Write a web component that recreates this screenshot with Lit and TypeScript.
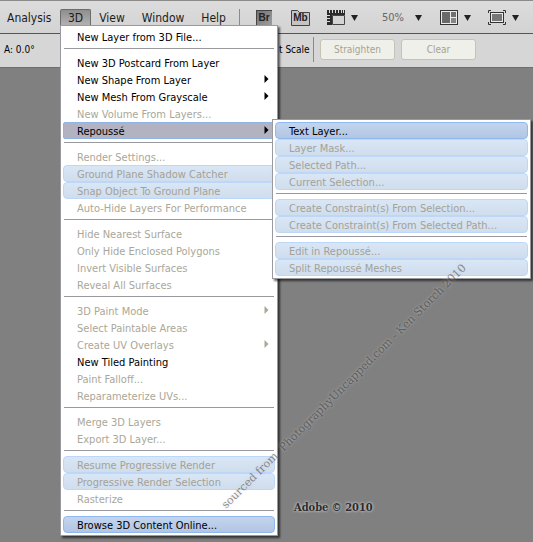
import { LitElement, html, css, svg, nothing, type TemplateResult } from "lit";
import { customElement, property } from "lit/decorators.js";

interface MenuEntry {
  label?: string;
  off?: boolean;
  tint?: boolean;
  open?: boolean;
  arrow?: boolean;
  children?: MenuEntry[];
}

const SEP: MenuEntry = {};

const REPOUSSE: MenuEntry[] = [
  { label: "Text Layer...", tint: true },
  { label: "Layer Mask...", tint: true, off: true },
  { label: "Selected Path...", tint: true, off: true },
  { label: "Current Selection...", tint: true, off: true },
  SEP,
  { label: "Create Constraint(s) From Selection...", tint: true, off: true },
  { label: "Create Constraint(s) From Selected Path...", tint: true, off: true },
  SEP,
  { label: "Edit in Repoussé...", tint: true, off: true },
  { label: "Split Repoussé Meshes", tint: true, off: true },
];

const MENU_3D: MenuEntry[] = [
  { label: "New Layer from 3D File..." },
  SEP,
  { label: "New 3D Postcard From Layer" },
  { label: "New Shape From Layer", arrow: true },
  { label: "New Mesh From Grayscale", arrow: true },
  { label: "New Volume From Layers...", off: true },
  { label: "Repoussé", arrow: true, open: true, children: REPOUSSE },
  SEP,
  { label: "Render Settings...", off: true },
  { label: "Ground Plane Shadow Catcher", off: true, tint: true },
  { label: "Snap Object To Ground Plane", off: true, tint: true },
  { label: "Auto-Hide Layers For Performance", off: true },
  SEP,
  { label: "Hide Nearest Surface", off: true },
  { label: "Only Hide Enclosed Polygons", off: true },
  { label: "Invert Visible Surfaces", off: true },
  { label: "Reveal All Surfaces", off: true },
  SEP,
  { label: "3D Paint Mode", off: true, arrow: true },
  { label: "Select Paintable Areas", off: true },
  { label: "Create UV Overlays", off: true, arrow: true },
  { label: "New Tiled Painting" },
  { label: "Paint Falloff...", off: true },
  { label: "Reparameterize UVs...", off: true },
  SEP,
  { label: "Merge 3D Layers", off: true },
  { label: "Export 3D Layer...", off: true },
  SEP,
  { label: "Resume Progressive Render", off: true, tint: true },
  { label: "Progressive Render Selection", off: true, tint: true },
  { label: "Rasterize", off: true },
  SEP,
  { label: "Browse 3D Content Online...", tint: true },
];

@customElement("menu-list")
export class MenuList extends LitElement {
  @property({ attribute: false }) entries: MenuEntry[] = [];

  static styles = css`
    :host {
      display: block;
      background: #fff;
      border: 1px solid #999a9f;
      padding: 2px;
      box-sizing: border-box;
      box-shadow: 2px 2px 2px rgba(0, 0, 0, 0.6);
      font: 11px/17px "DejaVu Sans Condensed", "DejaVu Sans", sans-serif;
    }
    .list {
      list-style: none;
      margin: 0;
      padding: 0;
    }
    .row {
      position: relative;
      height: 17px;
    }
    .sep {
      box-sizing: border-box;
      height: 9px;
      padding: 3px 1px 0;
    }
    .rule {
      height: 1px;
      background: #98989d;
    }
    .item {
      display: flex;
      align-items: center;
      justify-content: space-between;
      width: 100%;
      height: 17px;
      box-sizing: border-box;
      margin: 0;
      padding: 0 5px 0 13px;
      border: 1px solid transparent;
      border-radius: 4px;
      background: none;
      font: inherit;
      color: #000;
      white-space: nowrap;
      text-align: left;
    }
    .label {
      padding-top: 2px;
    }
    .tint {
      background: linear-gradient(#c3d5ee, #b2c5e2);
      border-color: #8fb8f0;
    }
    .off {
      color: #aaa798;
    }
    .off.tint {
      background: linear-gradient(#d9e6f6, #d0dded);
      border-color: #bdd7f8;
      color: #a3a298;
    }
    .open {
      background: #b2b2c0;
      border-color: #8fb4ea;
      border-radius: 2px;
    }
    .arrow {
      flex: none;
      width: 5px;
      height: 9px;
      fill: currentColor;
    }
    .sub {
      position: absolute;
      z-index: 1;
      top: -3px;
      left: calc(100% - 3px);
      width: 259px;
    }
  `;

  private entry(e: MenuEntry): TemplateResult {
    if (!e.label) {
      return html`<li class="sep" role="separator"><div class="rule"></div></li>`;
    }
    const cls = ["item", e.tint && "tint", e.off && "off", e.open && "open"]
      .filter(Boolean)
      .join(" ");
    return html`<li class="row" role="none">
      <button class=${cls} role="menuitem" ?disabled=${!!e.off}>
        <span class="label">${e.label}</span>
        ${e.arrow
          ? html`<svg class="arrow" viewBox="0 0 5 9"><path d="M0.500 0L4.500 4L0.500 8Z" /></svg>`
          : nothing}
      </button>
      ${e.children ? html`<menu-list class="sub" .entries=${e.children}></menu-list>` : nothing}
    </li>`;
  }

  render() {
    return html`<ul class="list" role="menu">${this.entries.map((e) => this.entry(e))}</ul>`;
  }
}

const rulerIcon = svg`
  <path d="M0 0H18V5H5V15H0Z" fill="#2b2b2b" />
  <path d="M5.500 5.500H17.500V14.500H5.500Z" fill="#d4d4d4" stroke="#444" />
  <path d="M5.500 0V3M8.500 0V3M11.500 0V3M14.500 0V3M16.500 0V3M0 5.500H3M0 8.500H3M0 11.500H3M2.500 0V3" stroke="#dcdcdc" />`;

const layoutIcon = svg`
  <rect x="0.500" y="0.500" width="17" height="14" fill="#ececec" stroke="#333" />
  <rect x="2" y="2" width="8" height="11" fill="#6a6a6a" />
  <rect x="11" y="2" width="5" height="5" fill="#6f6f6f" />
  <rect x="11" y="8" width="5" height="5" fill="#858585" />`;

const screenIcon = svg`
  <path d="M0.500 3V0.500H3M15 0.500H17.500V3M17.500 12V14.500H15M3 14.500H0.500V12" fill="none" stroke="#333" />
  <rect x="2.500" y="2.500" width="13" height="10" fill="#ececec" stroke="#333" />
  <rect x="4" y="4" width="10" height="7" fill="#777" />`;

@customElement("app-root")
export class AppRoot extends LitElement {
  static styles = css`
    :host {
      display: flex;
      flex-direction: column;
      min-height: 100vh;
      overflow: hidden;
      position: relative;
      background: #808080;
      color: #1c1c1c;
      font: 11px/17px "DejaVu Sans Condensed", "DejaVu Sans", sans-serif;
    }
    .menubar {
      display: flex;
      align-items: flex-start;
      height: 34px;
      box-sizing: border-box;
      padding-top: 8px;
      border-top: 1px solid #8b8b8b;
      border-bottom: 1px solid #555;
      background: linear-gradient(#dcdcdc, #d3d3d3);
    }
    .menus {
      display: flex;
      width: 239px;
      flex: none;
    }
    .slot {
      position: relative;
      display: flex;
    }
    .first {
      width: 60px;
    }
    .top {
      height: 17px;
      box-sizing: border-box;
      padding: 0 7px;
      border: 1px solid transparent;
      border-bottom: 0;
      border-radius: 2px 2px 0 0;
      background: none;
      color: #1c1c1c;
      font: 12px/16px "DejaVu Sans Condensed", "DejaVu Sans", sans-serif;
    }
    .lead {
      padding: 0 0 0 6px;
    }
    .wide {
      padding: 0 8px;
    }
    .pressed {
      background: linear-gradient(#8e8e8e, #b4b4b4);
      border-color: #6c6c6c;
    }
    .drop {
      position: absolute;
      z-index: 2;
      top: 16px;
      left: 0;
      width: 218px;
    }
    .split {
      flex: none;
      width: 1px;
      height: 18px;
      background: #8a8a8a;
    }
    .tools {
      display: flex;
      align-items: center;
      height: 17px;
    }
    .tool {
      display: flex;
      align-items: center;
      gap: 6px;
      height: 17px;
      margin: 0;
      padding: 0;
      border: 0;
      background: none;
    }
    .bridge,
    .mini {
      height: 16px;
      justify-content: center;
      color: #222;
      font: bold 10px/16px "Liberation Sans", sans-serif;
    }
    .bridge {
      width: 16px;
      margin: 0 19px 0 16px;
      background: linear-gradient(135deg, #707070, #a0a0a0);
      box-shadow: inset 1px 1px 0 #444;
    }
    .mini {
      position: relative;
      width: 19px;
      margin-right: 17px;
    }
    .folder {
      position: absolute;
      inset: 0;
      width: 19px;
      height: 16px;
    }
    .name {
      position: relative;
    }
    .glyph {
      width: 18px;
      height: 15px;
    }
    .down {
      width: 7px;
      height: 6px;
      fill: #222;
    }
    .zoom {
      display: flex;
      align-items: center;
      gap: 9px;
      margin: 0 18px 0 24px;
    }
    .pick {
      appearance: none;
      width: 24px;
      height: 17px;
      margin: 0;
      padding: 0;
      border: 0;
      background: none;
      color: #666;
      font: 11px/17px "DejaVu Sans Condensed", "DejaVu Sans", sans-serif;
    }
    .screen {
      margin-left: 17px;
    }
    .options {
      display: flex;
      align-items: center;
      height: 34px;
      box-sizing: border-box;
      padding-bottom: 3px;
      border-bottom: 1px solid #6e6e6e;
      background: #d6d6d6;
      font-size: 10px;
      color: #000;
      white-space: nowrap;
    }
    .angle {
      flex: none;
      box-sizing: border-box;
      width: 279px;
      padding-left: 4px;
    }
    .scale {
      flex: none;
      width: 34px;
    }
    .options .split {
      height: 25px;
      margin-right: 6px;
    }
    .action {
      width: 75px;
      height: 21px;
      margin: 0 6px 0 0;
      padding: 0;
      border: 1px solid #c3c3b8;
      border-radius: 3px;
      background: #f0f0ea;
      color: #a5a392;
      font: 10px/17px "DejaVu Sans Condensed", "DejaVu Sans", sans-serif;
    }
    .credit {
      position: absolute;
      left: 294px;
      top: 499px;
      margin: 0;
      color: #2c2c2c;
      font: bold 11px/17px "DejaVu Serif Condensed", "DejaVu Serif", serif;
      white-space: nowrap;
      text-shadow: 0 0 3px #ccc, 0 0 3px #bbb;
    }
    .mark {
      position: absolute;
      z-index: 3;
      left: 224px;
      top: 499px;
      margin: 0;
      color: rgba(40, 40, 40, 0.5);
      font: 11px/16px "DejaVu Serif", serif;
      white-space: pre;
      transform: rotate(-45deg);
      transform-origin: 0 50%;
      text-shadow: 0 0 3px rgba(210, 210, 210, 0.7);
      pointer-events: none;
    }
  `;

  private down() {
    return html`<svg class="down" viewBox="0 0 7 6"><path d="M0 0H7L3.500 6Z" /></svg>`;
  }

  render() {
    return html`
      <header class="menubar">
        <nav class="menus">
          <div class="slot first"><button class="top lead">Analysis</button></div>
          <div class="slot">
            <button class="top pressed" aria-haspopup="menu" aria-expanded="true">3D</button>
            <menu-list class="drop" .entries=${MENU_3D}></menu-list>
          </div>
          <div class="slot"><button class="top">View</button></div>
          <div class="slot"><button class="top wide">Window</button></div>
          <div class="slot"><button class="top">Help</button></div>
        </nav>
        <div class="split"></div>
        <div class="tools">
          <button class="tool bridge">Br</button>
          <button class="tool mini">
            <svg class="folder" viewBox="0 0 19 16">
              <path d="M0.500 0.500H6.500L8.500 2.500H18.500V15.500H0.500Z" fill="#c4c4c4" stroke="#444" />
            </svg>
            <span class="name">Mb</span>
          </button>
          <button class="tool" aria-label="View extras">
            <svg class="glyph" viewBox="0 0 18 15">${rulerIcon}</svg>${this.down()}
          </button>
          <div class="zoom">
            <select class="pick" aria-label="Zoom level"><option>50%</option></select>
            ${this.down()}
          </div>
          <button class="tool" aria-label="Arrange documents">
            <svg class="glyph" viewBox="0 0 18 15">${layoutIcon}</svg>${this.down()}
          </button>
          <button class="tool screen" aria-label="Screen mode">
            <svg class="glyph" viewBox="0 0 18 15">${screenIcon}</svg>${this.down()}
          </button>
        </div>
      </header>
      <section class="options">
        <span class="angle">A: 0.0°</span>
        <span class="scale">t Scale</span>
        <div class="split"></div>
        <button class="action" disabled>Straighten</button>
        <button class="action" disabled>Clear</button>
      </section>
      <p class="credit">Adobe © 2010</p>
      <p class="mark">sourced from  PhotographyUncapped.com - Ken Storch 2010</p>
    `;
  }
}
